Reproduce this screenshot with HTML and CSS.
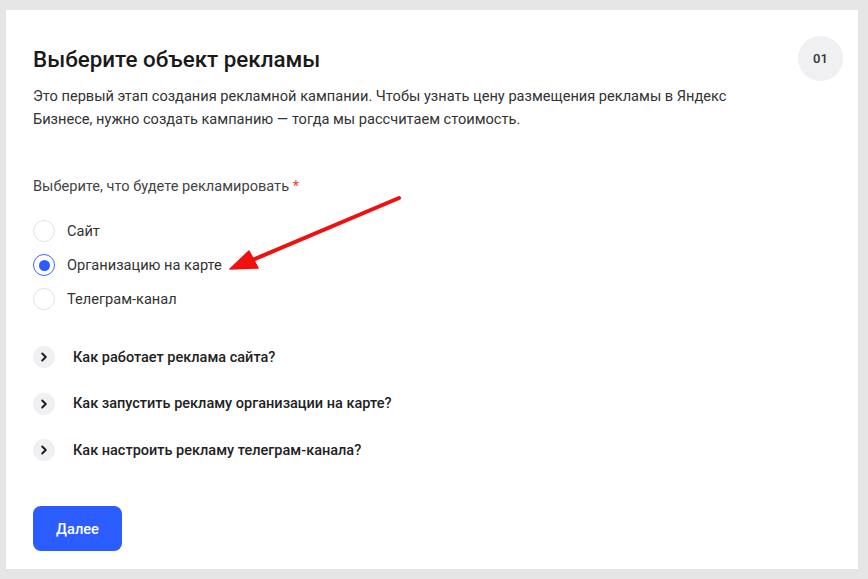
FILE: index.html
```html
<!DOCTYPE html>
<html lang="ru">
<head>
<meta charset="utf-8">
<link rel="stylesheet" href="styles.css">
</head>
<body>
<div class="card">
  <div class="header">
    <h1 class="title">Выберите объект рекламы</h1>
    <div class="step">01</div>
  </div>
  <p class="intro">Это первый этап создания рекламной кампании. Чтобы узнать цену размещения рекламы в Яндекс<br>Бизнесе, нужно создать кампанию — тогда мы рассчитаем стоимость.</p>
  <div class="label">Выберите, что будете рекламировать <span class="req">*</span></div>
  <div class="radios">
    <div class="radio"><span class="dot"></span><span>Сайт</span></div>
    <div class="radio checked"><span class="dot"></span><span>Организацию на карте</span></div>
    <div class="radio"><span class="dot"></span><span>Телеграм-канал</span></div>
  </div>
  <div class="faq">
    <div class="faq-item"><span class="chev"><svg width="10" height="10" viewBox="0 0 10 10"><path d="M3.2 1.5 L6.8 5 L3.2 8.5" fill="none" stroke="#1a1a1a" stroke-width="1.9" stroke-linecap="round" stroke-linejoin="round"/></svg></span><span>Как работает реклама сайта?</span></div>
    <div class="faq-item"><span class="chev"><svg width="10" height="10" viewBox="0 0 10 10"><path d="M3.2 1.5 L6.8 5 L3.2 8.5" fill="none" stroke="#1a1a1a" stroke-width="1.9" stroke-linecap="round" stroke-linejoin="round"/></svg></span><span>Как запустить рекламу организации на карте?</span></div>
    <div class="faq-item"><span class="chev"><svg width="10" height="10" viewBox="0 0 10 10"><path d="M3.2 1.5 L6.8 5 L3.2 8.5" fill="none" stroke="#1a1a1a" stroke-width="1.9" stroke-linecap="round" stroke-linejoin="round"/></svg></span><span>Как настроить рекламу телеграм-канала?</span></div>
  </div>
  <button class="next">Далее</button>
</div>
<svg class="arrow" width="868" height="579" viewBox="0 0 868 579">
  <line x1="399" y1="198" x2="250" y2="261" stroke="#f01010" stroke-width="4" stroke-linecap="round"/>
  <polygon points="230,269 249,251 258,268" fill="#f01010" stroke="#f01010" stroke-width="1.5" stroke-linejoin="round"/>
</svg>
</body>
</html>
```
FILE: styles.css
```css
html, body {
  margin: 0;
  padding: 0;
}
body {
  background: #e6e6e6;
  width: 868px;
  height: 579px;
  padding: 10px 10px 10px 6px;
  box-sizing: border-box;
  font-family: Roboto, "Noto Sans", sans-serif;
  color: #222;
  position: relative;
}
.card {
  background: #fff;
  width: 852px;
  height: 559px;
  box-sizing: border-box;
  padding: 26px 15px 0 27px;
}
.header {
  display: flex;
  align-items: center;
  justify-content: space-between;
  height: 45px;
}
.title {
  margin: 0;
  font-size: 22.4px;
  font-weight: 500;
  color: #1a1a1a;
  line-height: 28px;
}
.step {
  width: 45px;
  height: 45px;
  border-radius: 50%;
  background: #f0f0f3;
  display: flex;
  align-items: center;
  justify-content: center;
  font-size: 13px;
  font-weight: 500;
  color: #333;
}
.intro {
  margin: 4px 0 0;
  font-size: 14.6px;
  line-height: 23px;
  color: #333;
}
.label {
  margin-top: 44px;
  font-size: 14.6px;
  line-height: 22px;
  color: #444;
}
.req {
  color: #f03a3a;
}
.radios {
  margin-top: 23px;
  display: flex;
  flex-direction: column;
  gap: 12px;
}
.radio {
  display: flex;
  align-items: center;
  gap: 12px;
  height: 22px;
  font-size: 14.6px;
  color: #333;
}
.dot {
  width: 22px;
  height: 22px;
  box-sizing: border-box;
  border-radius: 50%;
  border: 1px solid #e2e2e6;
  background: #fff;
}
.radio.checked .dot {
  border: 1.5px solid #3b68ff;
  display: flex;
  align-items: center;
  justify-content: center;
}
.radio.checked .dot::after {
  content: "";
  width: 11px;
  height: 11px;
  border-radius: 50%;
  background: #2a5cff;
}
.faq {
  margin-top: 36px;
  display: flex;
  flex-direction: column;
  gap: 24.5px;
}
.faq-item {
  display: flex;
  align-items: center;
  gap: 18px;
  height: 22px;
  font-size: 14.5px;
  font-weight: 500;
  color: #222;
}
.chev {
  width: 22px;
  height: 22px;
  border-radius: 50%;
  background: #f0f0f2;
  display: flex;
  align-items: center;
  justify-content: center;
}
.next {
  margin-top: 45px;
  width: 89px;
  height: 45px;
  border: none;
  border-radius: 8px;
  background: #2b5cff;
  color: #fff;
  font-family: Roboto, "Noto Sans", sans-serif;
  font-size: 14.6px;
  font-weight: 500;
}
.arrow {
  position: absolute;
  left: 0;
  top: 0;
  pointer-events: none;
}
```
